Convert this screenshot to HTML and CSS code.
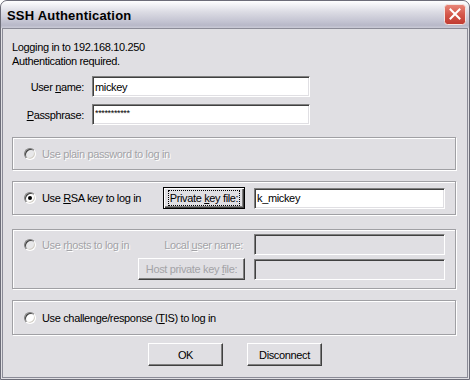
FILE: index.html
```html
<!DOCTYPE html>
<html lang="en">
<head>
    <meta charset="UTF-8">
    <meta name="viewport" content="width=device-width, initial-scale=1.0">
    <title>SSH Authentication</title>
    <link rel="stylesheet" href="styles.css">
</head>
<body>
    <div class="window">
        <div class="titlebar">
            <span class="title">SSH Authentication</span>
            <span class="close">
                <svg width="22" height="21" viewBox="0 0 22 21">
                    <defs>
                        <linearGradient id="red" x1="0" y1="0" x2="0" y2="1">
                            <stop offset="0" stop-color="#e9877a"/>
                            <stop offset="0.5" stop-color="#d4574a"/>
                            <stop offset="1" stop-color="#c03a30"/>
                        </linearGradient>
                    </defs>
                    <rect x="0.5" y="0.5" width="21" height="20" rx="3" fill="url(#red)" stroke="#f4e4e0"/>
                    <path d="M6.5 5.5 L15.5 14.5 M15.5 5.5 L6.5 14.5" stroke="#fff" stroke-width="2" stroke-linecap="square"/>
                </svg>
            </span>
        </div>

        <div class="client">
            <p class="info">Logging in to 192.168.10.250<br>Authentication required.</p>

            <div class="field">
                <label>User <u>n</u>ame:</label>
                <input class="edit" type="text" value="mickey" readonly>
            </div>
            <div class="field second">
                <label><u>P</u>assphrase:</label>
                <input class="edit pass" type="text" value="***********" readonly>
            </div>

            <div class="group g1 disabled">
                <span class="radio"></span>
                <span>Use plain password to log in</span>
            </div>

            <div class="group g2">
                <span class="radio checked"></span>
                <span>Use <u>R</u>SA key to log in</span>
                <button class="btn focus key-btn"><span>Private <u>k</u>ey file:</span></button>
                <input class="edit side" type="text" value="k_mickey" readonly>
            </div>

            <div class="group g3 disabled">
                <div class="opt">
                    <span class="radio"></span>
                    <span>Use r<u>h</u>osts to log in</span>
                </div>
                <span class="local-label">Local <u>u</u>ser name:</span>
                <input class="edit side off" type="text" value="" readonly>
                <span></span>
                <button class="btn host-btn">Host private key <u>f</u>ile:</button>
                <input class="edit side off" type="text" value="" readonly>
            </div>

            <div class="group g4">
                <span class="radio"></span>
                <span>Use challenge/response (<u>T</u>IS) to log in</span>
            </div>

            <div class="buttons">
                <button class="btn push">OK</button>
                <button class="btn push">Disconnect</button>
            </div>
        </div>
    </div>
</body>
</html>
```

FILE: styles.css
```css
* {
    box-sizing: border-box;
}
body {
    margin: 0;
    width: 470px;
    height: 380px;
    font-family: "Liberation Sans", Arial, sans-serif;
    font-size: 11px;
    letter-spacing: -0.35px;
    color: #000;
    background: #fff;
}
.window {
    width: 470px;
    height: 380px;
    border: 1px solid #6d6d79;
    border-radius: 7px 7px 0 0;
    background: #e0dfe3;
    display: flex;
    flex-direction: column;
    overflow: hidden;
}
.titlebar {
    height: 27px;
    flex: none;
    display: flex;
    align-items: center;
    justify-content: space-between;
    padding: 0 3px 0 6px;
    border-radius: 6px 6px 0 0;
    background: linear-gradient(to bottom, #ffffff 0%, #f4f4f7 12%, #dcdce4 40%, #c4c4d2 75%, #b8b8c8 90%, #cacad6 100%);
}
.title {
    font-size: 13px;
    font-weight: bold;
    letter-spacing: 0.2px;
    padding-top: 1px;
}
.close {
    display: flex;
}
.client {
    flex: 1;
    margin: 0 1px 1px;
    border: 1px solid #8b8b97;
    padding-top: 11px;
}
.info {
    margin: 0 0 0 9px;
    line-height: 14px;
}
.field {
    display: flex;
    align-items: center;
    margin: 8px 0 0 9px;
}
.field.second {
    margin-top: 7px;
}
.field label {
    width: 72px;
    text-align: right;
    margin-right: 8px;
}
.edit {
    height: 21px;
    width: 218px;
    margin: 0;
    padding: 0 2px;
    font: inherit;
    letter-spacing: inherit;
    color: #000;
    background: #fff;
    border: 1px solid;
    border-color: #7f7f7f #fff #fff #7f7f7f;
    box-shadow: inset 1px 1px 0 #404040, inset -1px -1px 0 #e0dfe3;
    outline: none;
}
.edit.pass {
    font-size: 9px;
    padding-bottom: 4px;
}
.edit.side {
    width: 191px;
}
.edit.off {
    background: #e0dfe3;
}
.group {
    margin-left: 9px;
    width: 444px;
    border: 1px solid #a0a0a4;
    box-shadow: 1px 1px 0 #fff, inset 1px 1px 0 #fff;
    display: flex;
    align-items: center;
    padding: 0 10px 0 11px;
    white-space: nowrap;
}
.g1 {
    margin-top: 12px;
    height: 33px;
}
.g2 {
    margin-top: 11px;
    height: 34px;
}
.g3 {
    margin-top: 14px;
    height: 60px;
    display: grid;
    grid-template-columns: minmax(0, 1fr) auto 191px;
    grid-template-rows: 21px 22px;
    row-gap: 3px;
    column-gap: 9px;
    padding: 4px 10px 8px 11px;
}
.g4 {
    margin-top: 11px;
    height: 35px;
}
.opt {
    display: flex;
    align-items: center;
}
.radio {
    width: 12px;
    height: 12px;
    flex: none;
    margin-right: 6px;
    border-radius: 50%;
    border: 1px solid;
    border-color: #808080 #fff #fff #808080;
    box-shadow: inset 1px 1px 0 #404040, inset -1px -1px 0 #d4d0c8;
    background: #fff;
    position: relative;
}
.radio.checked::after {
    content: "";
    position: absolute;
    left: 3px;
    top: 3px;
    width: 4px;
    height: 4px;
    border-radius: 50%;
    background: #000;
}
.disabled {
    color: #a3a3a7;
    text-shadow: 1px 1px 0 #fff;
}
.disabled .radio {
    background: #e8e8ea;
}
.local-label {
    justify-self: end;
    margin-right: 2px;
}
.btn {
    height: 22px;
    margin: 0;
    padding: 0 4px;
    font: inherit;
    letter-spacing: inherit;
    color: inherit;
    background: #e0dfe3;
    border: 1px solid;
    border-color: #fff #404040 #404040 #fff;
    box-shadow: inset -1px -1px 0 #808080;
    white-space: nowrap;
}
.btn.focus {
    border: 1px solid #000;
    box-shadow: inset 1px 1px 0 #fff, inset -1px -1px 0 #404040, inset -2px -2px 0 #808080;
}
.btn.focus span {
    outline: 1px dotted #000;
    outline-offset: 1px;
}
.key-btn {
    width: 82px;
    margin-left: auto;
    margin-right: 9px;
}
.host-btn {
    width: 107px;
}
.buttons {
    display: flex;
    justify-content: center;
    gap: 24px;
    margin-top: 8px;
}
.push {
    width: 75px;
    height: 23px;
}
```
